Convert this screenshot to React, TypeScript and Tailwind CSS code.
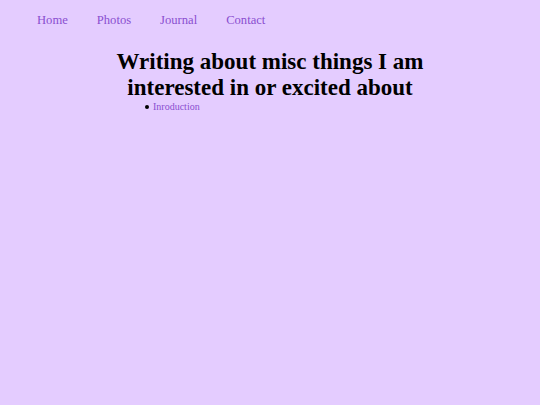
export default function App() {
  const links = ['Home', 'Photos', 'Journal', 'Contact'];
  return (
    <div className="min-h-[405px] w-full bg-[#e4ccff] font-['Liberation_Serif',serif]">
      <nav className="flex gap-[29px] pl-[37px] pt-[12px] text-[12.6px] leading-[16px] text-[#8a4fd0]">
        {links.map((l) => (
          <a key={l} href="#">
            {l}
          </a>
        ))}
      </nav>
      <h1 className="mx-auto mt-[21px] w-[360px] text-center text-[23px] font-bold leading-[26px] text-black">
        Writing about misc things I am interested in or excited about
      </h1>
      <ul className="pl-[145px] text-[10px] leading-[12px] text-[#8a4fd0]">
        <li className="flex items-center gap-[4px]">
          <span className="h-[4px] w-[4px] rounded-full bg-black" />
          <a href="#">Inroduction</a>
        </li>
      </ul>
    </div>
  );
}
